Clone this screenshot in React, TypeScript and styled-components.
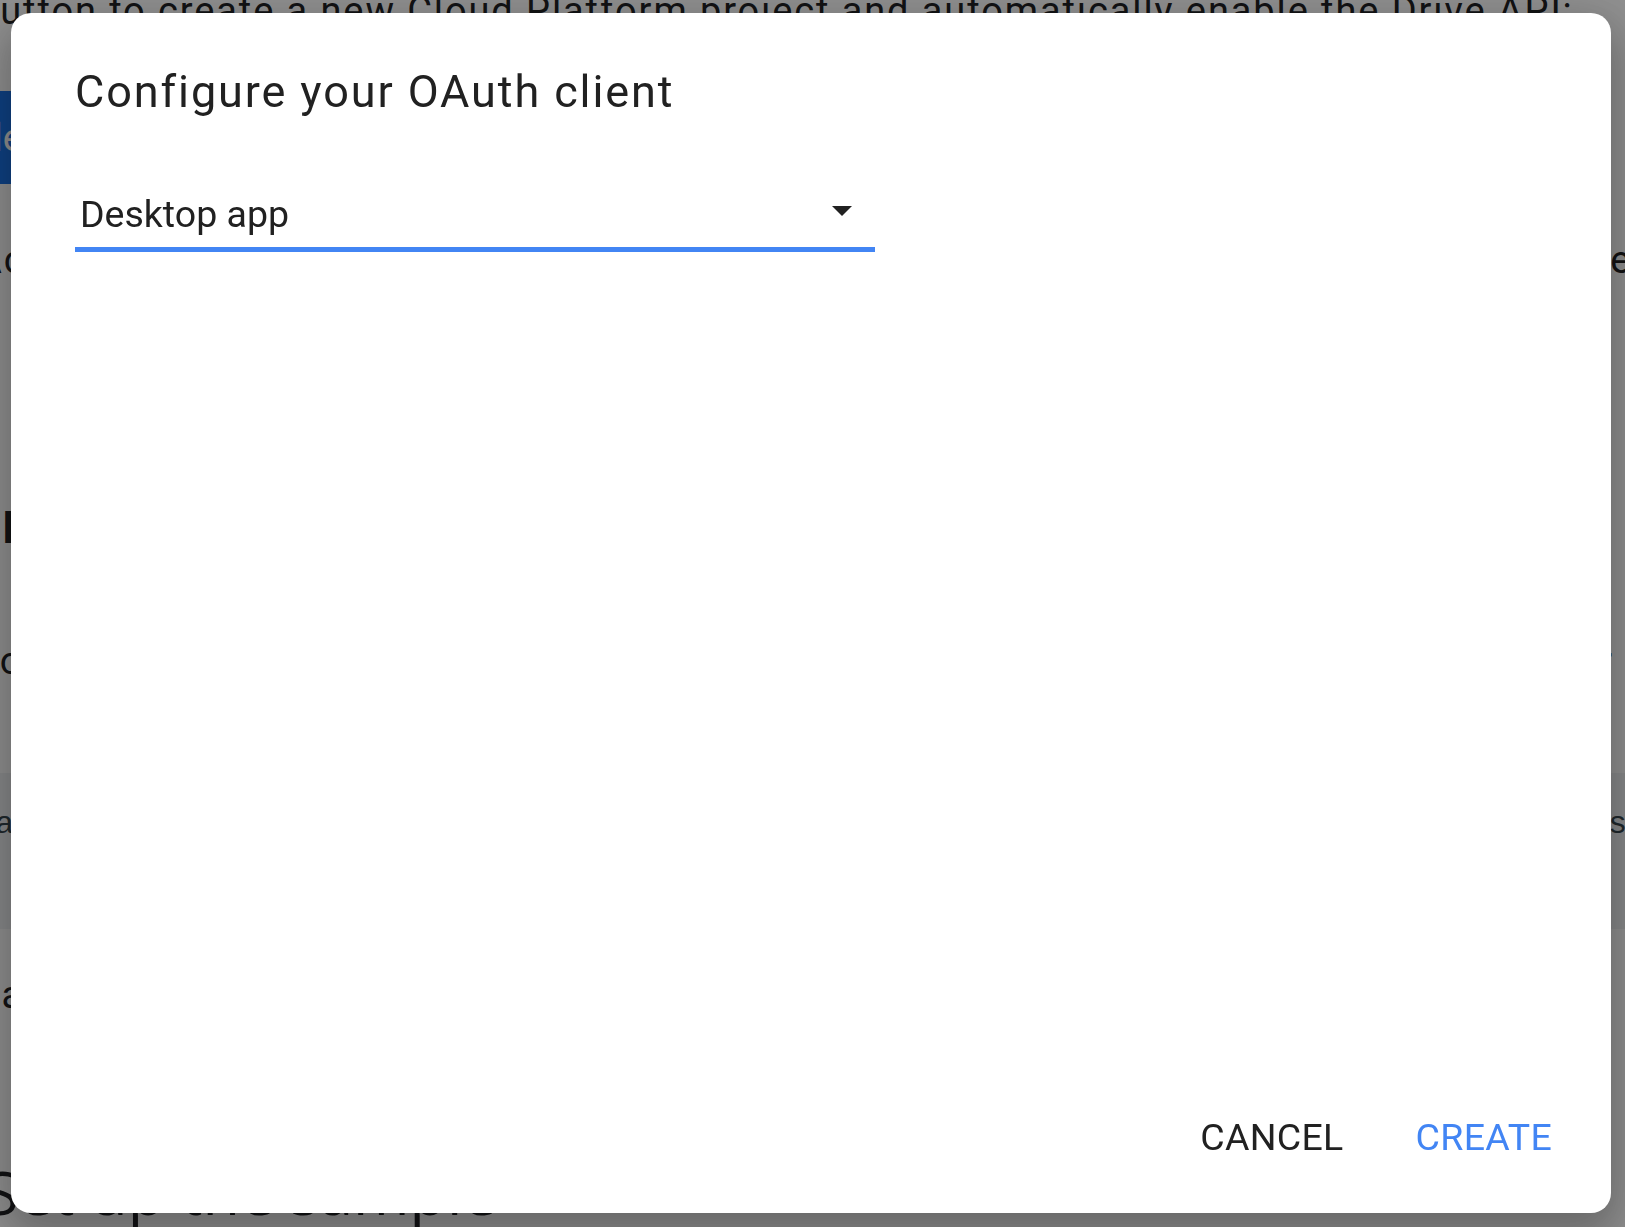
import React from "react";
import styled, { createGlobalStyle } from "styled-components";

const GlobalStyle = createGlobalStyle`
  html, body {
    margin: 0;
    padding: 0;
    overflow: hidden;
  }
  body {
    width: 1625px;
    height: 1227px;
    background: #fff;
    font-family: Roboto, "Liberation Sans", Arial, sans-serif;
    -webkit-font-smoothing: antialiased;
  }
`;

// underlying docs page, dimmed by the scrim
const Page = styled.main`
  position: relative;
  width: 1625px;
  height: 1227px;
  overflow: hidden;
  background: #fff;
  color: #202124;
`;

const Column = styled.div`
  display: flex;
  flex-direction: column;
  align-items: flex-start;
  width: 1680px;
  margin-left: -23px;
`;

const Para = styled.p<{ $top: number }>`
  margin: ${(p) => p.$top}px 0 0;
  font-size: 38px;
  line-height: 48px;
  letter-spacing: 1.9px;
  white-space: nowrap;
`;

const EnableButton = styled.div`
  margin: 56px 0 0 -92px;
  height: 93px;
  padding: 0 24px;
  display: flex;
  align-items: center;
  background: #1a73e8;
  color: #fff;
  font-size: 38px;
  border-radius: 4px;
  white-space: nowrap;
`;

const Heading = styled.h2<{ $top: number; $indent: number; $size: number }>`
  margin: ${(p) => p.$top}px 0 0 ${(p) => p.$indent}px;
  font-size: ${(p) => p.$size}px;
  line-height: 1.2;
  font-weight: 700;
  white-space: nowrap;
`;

const SampleHeading = styled(Heading)`
  font-family: "Open Sans", Roboto, sans-serif;
  font-weight: 400;
`;

const CodeBlock = styled.pre<{ $top: number }>`
  margin: ${(p) => p.$top}px 0 0;
  width: 1700px;
  height: 156px;
  padding: 28px 18px;
  box-sizing: border-box;
  background: #f1f3f4;
  color: #37474f;
  font-family: "Liberation Mono", monospace;
  font-size: 32px;
  line-height: 48px;
  white-space: nowrap;
`;

// modal layer
const Scrim = styled.div`
  position: fixed;
  inset: 0;
  background: rgba(0, 0, 0, 0.44);
  display: flex;
  align-items: flex-start;
  justify-content: flex-start;
  padding: 13px 0 0 11px;
`;

const Dialog = styled.div`
  width: 1600px;
  height: 1200px;
  display: flex;
  flex-direction: column;
  background: #fff;
  border-radius: 20px;
  box-shadow: 0 22px 40px 6px rgba(0, 0, 0, 0.18), 0 10px 50px 10px rgba(0, 0, 0, 0.12);
  color: #212121;
`;

const Title = styled.h1`
  margin: 53px 64px 0;
  font-size: 45px;
  line-height: 52.8px;
  font-weight: 400;
  letter-spacing: 1.9px;
`;

const SelectField = styled.div`
  width: 800px;
  box-sizing: border-box;
  margin: 73px 0 0 64px;
  padding: 0 23px 10px 5px;
  display: flex;
  align-items: flex-start;
  border-bottom: 5px solid #4285f4;
  cursor: pointer;
`;

const SelectValue = styled.span`
  flex: 1;
  font-size: 37.5px;
  line-height: 45px;
`;

const Caret = styled.svg`
  width: 20px;
  height: 10px;
  margin-top: 14px;
  fill: #212121;
`;

const Actions = styled.div`
  margin-top: auto;
  padding: 0 59px 53px 0;
  display: flex;
  justify-content: flex-end;
  gap: 72px;
`;

const ActionButton = styled.button<{ $primary?: boolean }>`
  border: 0;
  padding: 0;
  background: none;
  font-family: Roboto, "Liberation Sans", Arial, sans-serif;
  font-size: 37.5px;
  line-height: 45px;
  letter-spacing: 0.3px;
  color: ${(p) => (p.$primary ? "#4285f4" : "#212121")};
  cursor: pointer;
`;

export default function App() {
  return (
    <>
      <GlobalStyle />
      <Page>
        <Column>
          <Para $top={-13}>
            button to create a new Cloud Platform project and automatically enable the Drive API:
          </Para>
          <EnableButton>Enable the Drive API</EnableButton>
          <Para $top={52}>
            Accept the consent screen, then click DOWNLOAD CLIENT CONFIGURATION and save the file to the desc
          </Para>
          <Heading $top={218} $indent={25} $size={44}>
            Install the Google Client Library
          </Heading>
          <Para $top={82}>
            To install the library, run the following command in your terminal from the project folder
          </Para>
          <CodeBlock $top={88}>
            add google-api-python-client google-auth-httplib2 google-auth-oauthlib --upgrade --user
          </CodeBlock>
          <Para $top={42}>
            Save the credentials.json file in your working directory before running the sample code.
          </Para>
          <SampleHeading $top={136} $indent={8} $size={61}>
            Set up the sample
          </SampleHeading>
        </Column>
      </Page>
      <Scrim>
        <Dialog role="dialog" aria-labelledby="oauth-title">
          <Title id="oauth-title">Configure your OAuth client</Title>
          <SelectField>
            <SelectValue>Desktop app</SelectValue>
            <Caret viewBox="0 0 20 10">
              <path d="M0 0h20L10 10z" />
            </Caret>
          </SelectField>
          <Actions>
            <ActionButton>CANCEL</ActionButton>
            <ActionButton $primary>CREATE</ActionButton>
          </Actions>
        </Dialog>
      </Scrim>
    </>
  );
}
